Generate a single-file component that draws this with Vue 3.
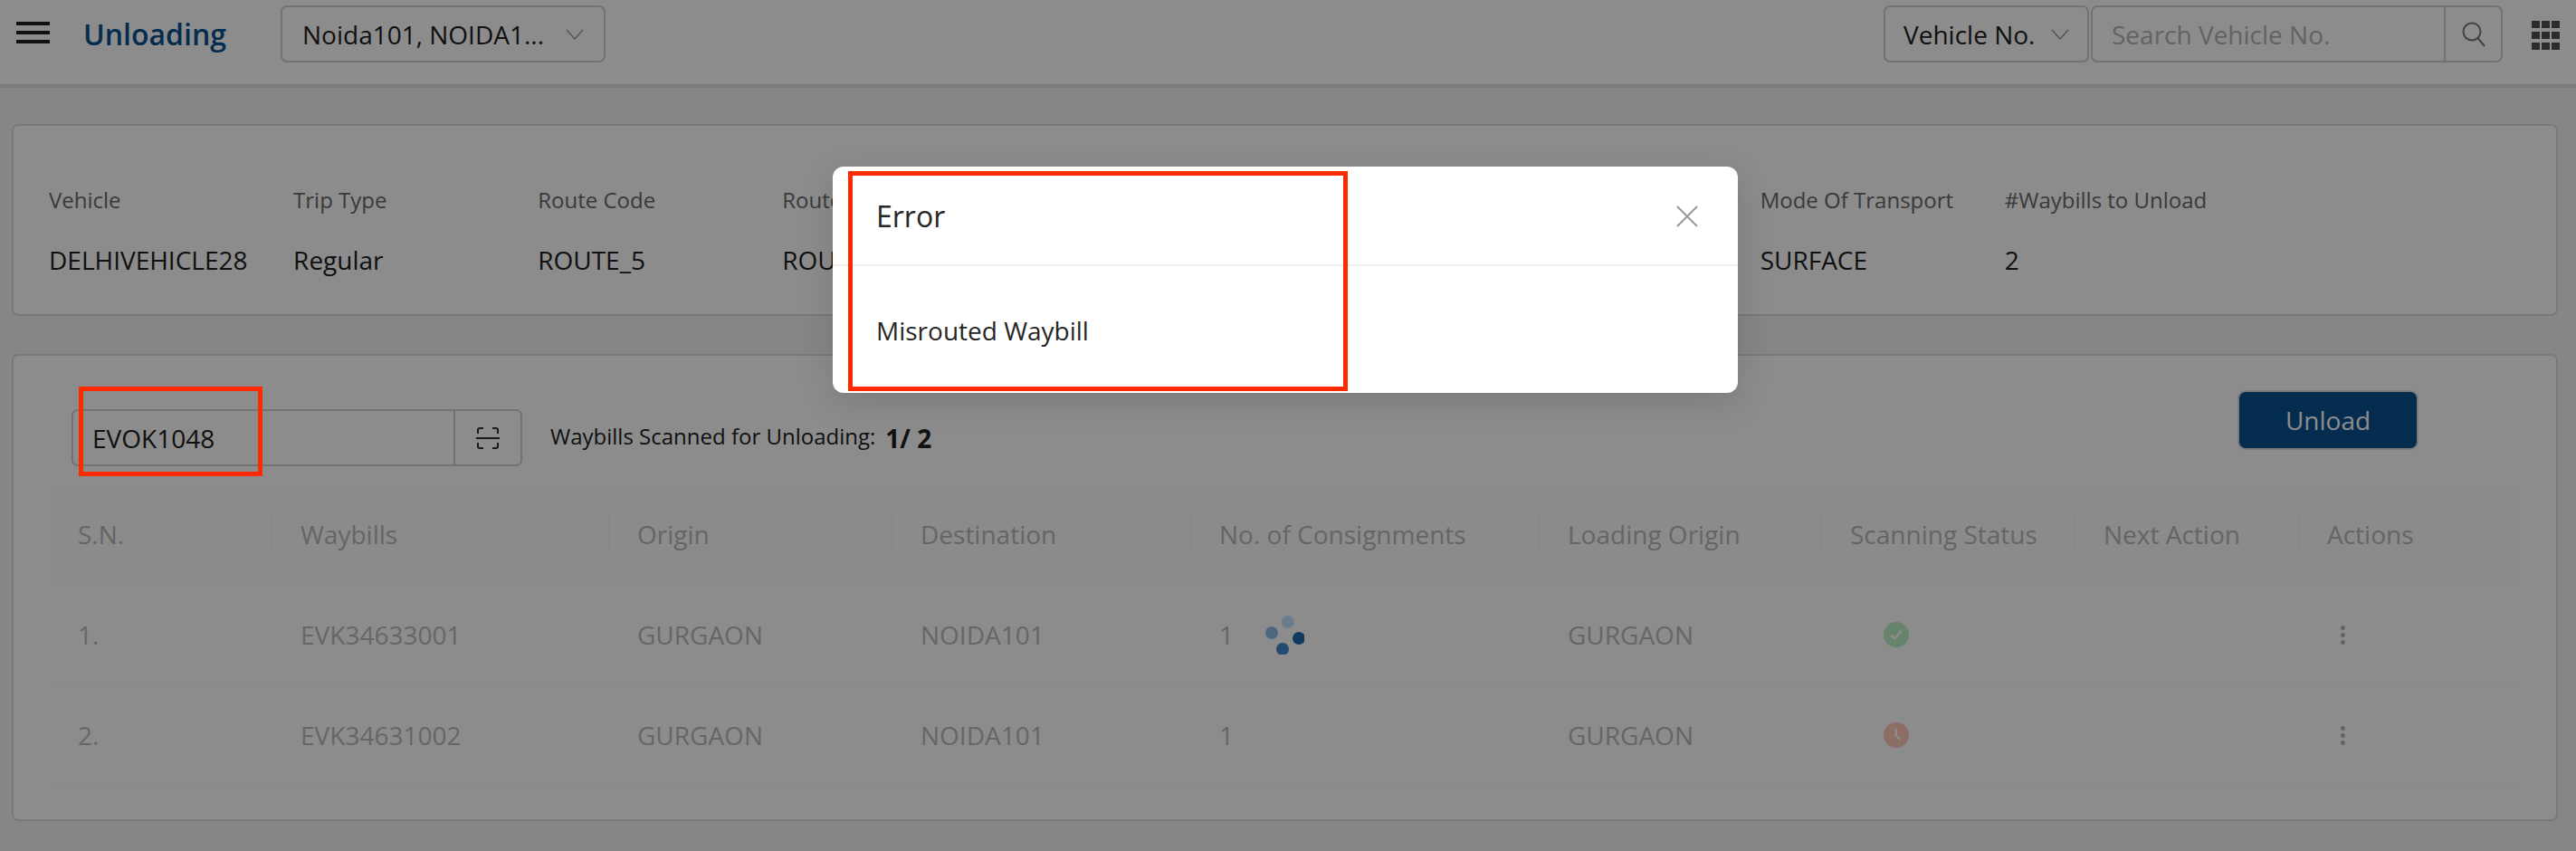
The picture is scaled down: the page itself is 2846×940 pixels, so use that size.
<template>
  <div class="page">
    <header class="topbar">
      <button class="menu-btn"><span></span><span></span><span></span></button>
      <h1 class="title">Unloading</h1>
      <div class="select hub-select">
        <span>Noida101, NOIDA1...</span>
        <svg class="chev" viewBox="0 0 20 12"><path d="M1 1l9 10 9-10" /></svg>
      </div>
      <div class="top-right">
        <div class="select type-select">
          <span>Vehicle No.</span>
          <svg class="chev" viewBox="0 0 20 12"><path d="M1 1l9 10 9-10" /></svg>
        </div>
        <div class="search">
          <span class="search-text">Search Vehicle No.</span>
          <span class="search-btn">
            <svg viewBox="0 0 30 30" width="30" height="30">
              <circle cx="13" cy="12" r="9.5" />
              <path d="M19.5 19l7.5 9" />
            </svg>
          </span>
        </div>
        <div class="apps">
          <i v-for="n in 9" :key="n"></i>
        </div>
      </div>
    </header>

    <section class="card info-card">
      <div v-for="item in info" :key="item.label" class="info-col">
        <div class="info-label">{{ item.label }}</div>
        <div class="info-value">{{ item.value }}</div>
      </div>
    </section>

    <section class="card scan-card">
      <div class="toolbar">
        <div class="scan-input">
          <span class="scan-text">EVOK1048</span>
          <span class="scan-btn">
            <svg viewBox="0 0 26 24" width="26" height="24">
              <path d="M2 7V3a2 2 0 0 1 2-2h4M18 1h4a2 2 0 0 1 2 2v4M2 17v4a2 2 0 0 0 2 2h4M18 23h4a2 2 0 0 0 2-2v-4" />
              <path d="M0 12h26" />
            </svg>
          </span>
        </div>
        <div class="scan-count">
          <span>Waybills Scanned for Unloading:</span>
          <b>1/ 2</b>
        </div>
        <button class="unload-btn">Unload</button>
      </div>

      <table class="waybills">
        <colgroup>
          <col v-for="w in colWidths" :key="w.key" :style="{ width: w.width + 'px' }" />
        </colgroup>
        <thead>
          <tr>
            <th v-for="h in headers" :key="h">{{ h }}</th>
          </tr>
        </thead>
        <tbody>
          <tr v-for="(row, i) in rows" :key="row.id">
            <td>{{ i + 1 }}.</td>
            <td>{{ row.id }}</td>
            <td>{{ row.origin }}</td>
            <td>{{ row.dest }}</td>
            <td>
              <div class="consign">
                <span>{{ row.count }}</span>
                <svg v-if="i === 0" class="spinner" viewBox="0 0 44 44" width="44" height="44">
                  <circle cx="26" cy="8" r="7" fill="#c4e3ff" />
                  <circle cx="8" cy="20" r="7" fill="#91bde9" />
                  <circle cx="38" cy="26" r="7" fill="#1f69af" />
                  <circle cx="20" cy="38" r="7" fill="#4187cc" />
                </svg>
              </div>
            </td>
            <td>{{ row.loading }}</td>
            <td>
              <svg class="status" viewBox="0 0 28 28" width="28" height="28">
                <template v-if="row.done">
                  <circle cx="14" cy="14" r="14" fill="#bdeec4" />
                  <path d="M8.3 14.7l4 3.6 7.4-8.6" fill="none" stroke="#fff" stroke-width="2.5" />
                </template>
                <template v-else>
                  <circle cx="14" cy="14" r="14" fill="#ffc8b8" />
                  <path d="M13.7 6.7V14l4.6 4.7" fill="none" stroke="#fff" stroke-width="2.5" />
                </template>
              </svg>
            </td>
            <td></td>
            <td>
              <div class="kebab"><i></i><i></i><i></i></div>
            </td>
          </tr>
        </tbody>
      </table>
    </section>

    <div class="overlay">
      <div class="modal">
        <div class="modal-head">
          <span>Error</span>
          <svg viewBox="0 0 24 24" width="24" height="24">
            <path d="M1 1l22 22M23 1L1 23" />
          </svg>
        </div>
        <div class="modal-body">Misrouted Waybill</div>
      </div>
    </div>
    <div class="mark mark-modal"></div>
    <div class="mark mark-input"></div>
  </div>
</template>

<script setup>
const info = [
  { label: 'Vehicle', value: 'DELHIVEHICLE28' },
  { label: 'Trip Type', value: 'Regular' },
  { label: 'Route Code', value: 'ROUTE_5' },
  { label: 'Route Name', value: 'ROUTE_5' },
  { label: 'Origin', value: 'GURGAON' },
  { label: 'Destination', value: 'NOIDA101' },
  { label: 'Vendor', value: 'DELHIVERY' },
  { label: 'Mode Of Transport', value: 'SURFACE' },
  { label: '#Waybills to Unload', value: '2' }
]

const colWidths = [246, 372, 313, 330, 385, 312, 280, 247, 245].map((width, key) => ({ width, key }))

const headers = ['S.N.', 'Waybills', 'Origin', 'Destination', 'No. of Consignments', 'Loading Origin', 'Scanning Status', 'Next Action', 'Actions']

const rows = [
  { id: 'EVK34633001', origin: 'GURGAON', dest: 'NOIDA101', count: 1, loading: 'GURGAON', done: true },
  { id: 'EVK34631002', origin: 'GURGAON', dest: 'NOIDA101', count: 1, loading: 'GURGAON', done: false }
]
</script>

<style>
html, body { margin: 0; background: #f4f4f4; }
</style>

<style scoped>
.page {
  position: relative;
  height: 940px;
  overflow: hidden;
  background: #f4f4f4;
  font-family: "Open Sans", "Noto Sans", sans-serif;
  color: #202020;
}

.topbar {
  display: flex;
  align-items: flex-start;
  height: 93px;
  background: #fff;
  border-bottom: 4px solid #e0e0e0;
}
.menu-btn {
  display: flex;
  flex-direction: column;
  justify-content: space-between;
  width: 37px;
  height: 24px;
  margin: 24px 0 0 18px;
  padding: 0;
  border: 0;
  background: none;
}
.menu-btn span { height: 4px; background: #202020; }
.title {
  margin: 13px 0 0 37px;
  font-size: 32px;
  line-height: 50px;
  font-weight: 600;
  color: #095091;
}
.select {
  display: flex;
  align-items: center;
  justify-content: space-between;
  box-sizing: border-box;
  height: 63px;
  margin-top: 6px;
  border: 2px solid #d0d0d0;
  border-radius: 7px;
  font-size: 28px;
  color: #202020;
}
.hub-select { width: 359px; margin-left: 60px; padding: 0 22px; }
.type-select { width: 227px; padding: 0 20px 0 20px; }
.chev { width: 20px; height: 12px; fill: none; stroke: #9a9a9a; stroke-width: 1.5; }
.top-right { display: flex; align-items: flex-start; margin-left: auto; }
.search {
  display: flex;
  align-items: center;
  box-sizing: border-box;
  width: 455px;
  height: 63px;
  margin: 6px 0 0 2px;
  border: 2px solid #d0d0d0;
  border-radius: 7px;
}
.search-text { flex: 1; padding-left: 21px; font-size: 28px; color: #b4b4b4; }
.search-btn {
  display: flex;
  align-items: center;
  justify-content: center;
  width: 61px;
  height: 100%;
  border-left: 2px solid #d0d0d0;
}
.search-btn svg { fill: none; stroke: #7a7a7a; stroke-width: 2; }
.apps {
  display: grid;
  grid-template-columns: repeat(3, 9px);
  grid-auto-rows: 8px;
  gap: 4px 2px;
  margin: 23px 18px 0 32px;
}
.apps i { background: #505050; }

.card {
  box-sizing: border-box;
  margin-left: 13px;
  margin-right: 20px;
  border: 2px solid #dcdcdc;
  border-radius: 7px;
  background: #fff;
}
.info-card {
  display: grid;
  grid-template-columns: repeat(9, 270.1px);
  align-items: start;
  height: 212px;
  margin-top: 40px;
  padding: 63px 0 0 39px;
}
.info-label { font-size: 24px; line-height: 38px; color: #6a6a6a; }
.info-value { margin-top: 28px; font-size: 28px; line-height: 38px; color: #202020; }

.scan-card {
  height: 516px;
  margin-top: 42px;
  padding: 40px 40px 0 39px;
}
.toolbar { display: flex; align-items: flex-end; height: 82px; padding-left: 25px; }
.scan-input {
  display: flex;
  align-items: center;
  box-sizing: border-box;
  width: 498px;
  height: 63px;
  border: 2px solid #d0d0d0;
  border-radius: 7px;
}
.scan-text { flex: 1; padding-left: 21px; font-size: 28px; color: #202020; }
.scan-btn {
  display: flex;
  align-items: center;
  justify-content: center;
  width: 72px;
  height: 100%;
  border-left: 2px solid #d0d0d0;
}
.scan-btn svg { fill: none; stroke: #303030; stroke-width: 2; }
.scan-count {
  display: flex;
  align-items: center;
  gap: 11px;
  height: 63px;
  margin-left: 31px;
  font-size: 24px;
  color: #202020;
}
.scan-count span { position: relative; top: -2px; }
.scan-count b { font-size: 28px; font-weight: 700; }
.unload-btn {
  align-self: flex-start;
  width: 196px;
  height: 62px;
  margin-left: auto;
  margin-right: 114px;
  border: 0;
  border-radius: 7px;
  background: #095091;
  box-shadow: 0 0 0 2px #dcdcdc;
  font-family: inherit;
  font-size: 28px;
  color: #fff;
}

.waybills {
  width: 2730px;
  margin-top: 22px;
  border-collapse: collapse;
  table-layout: fixed;
  color: #bbb;
  font-size: 28px;
}
.waybills th {
  position: relative;
  height: 109px;
  padding: 0 0 3px 32px;
  box-sizing: border-box;
  background: #fdfdfd;
  font-weight: 400;
  text-align: left;
  color: #b9b9b9;
}
.waybills th + th::before {
  content: "";
  position: absolute;
  left: 0;
  top: 30px;
  height: 45px;
  width: 1px;
  background: #f5f5f5;
}
.waybills td {
  height: 110px;
  padding: 0 0 0 32px;
  border-bottom: 1px solid #f9f9f9;
}
.consign { display: flex; align-items: center; gap: 34px; }
.status { display: block; margin-left: 37px; }
.kebab {
  display: flex;
  flex-direction: column;
  gap: 3px;
  width: 6px;
  margin-left: 15px;
}
.kebab i { width: 5px; height: 5px; border-radius: 50%; background: #b4b4b4; }

.overlay {
  position: absolute;
  inset: 0;
  background: rgba(0, 0, 0, 0.45);
}
.modal {
  position: absolute;
  left: 920px;
  top: 184px;
  width: 1000px;
  height: 250px;
  border-radius: 12px;
  background: #fff;
  box-shadow: 0 10px 40px rgba(0, 0, 0, 0.12);
}
.modal-head {
  display: flex;
  align-items: center;
  justify-content: space-between;
  box-sizing: border-box;
  height: 110px;
  padding: 0 44px 0 48px;
  border-bottom: 2px solid #f0f0f0;
  font-size: 32px;
  color: #262626;
}
.modal-head svg { margin-top: 2px; fill: none; stroke: #999; stroke-width: 2; }
.modal-body { padding: 51px 48px 0; font-size: 28px; line-height: 40px; color: #262626; }

.mark {
  position: absolute;
  box-sizing: border-box;
  border: 5px solid #ff2a00;
}
.mark-modal { left: 937px; top: 189px; width: 552px; height: 243px; }
.mark-input { left: 87px; top: 427px; width: 203px; height: 99px; }
</style>
